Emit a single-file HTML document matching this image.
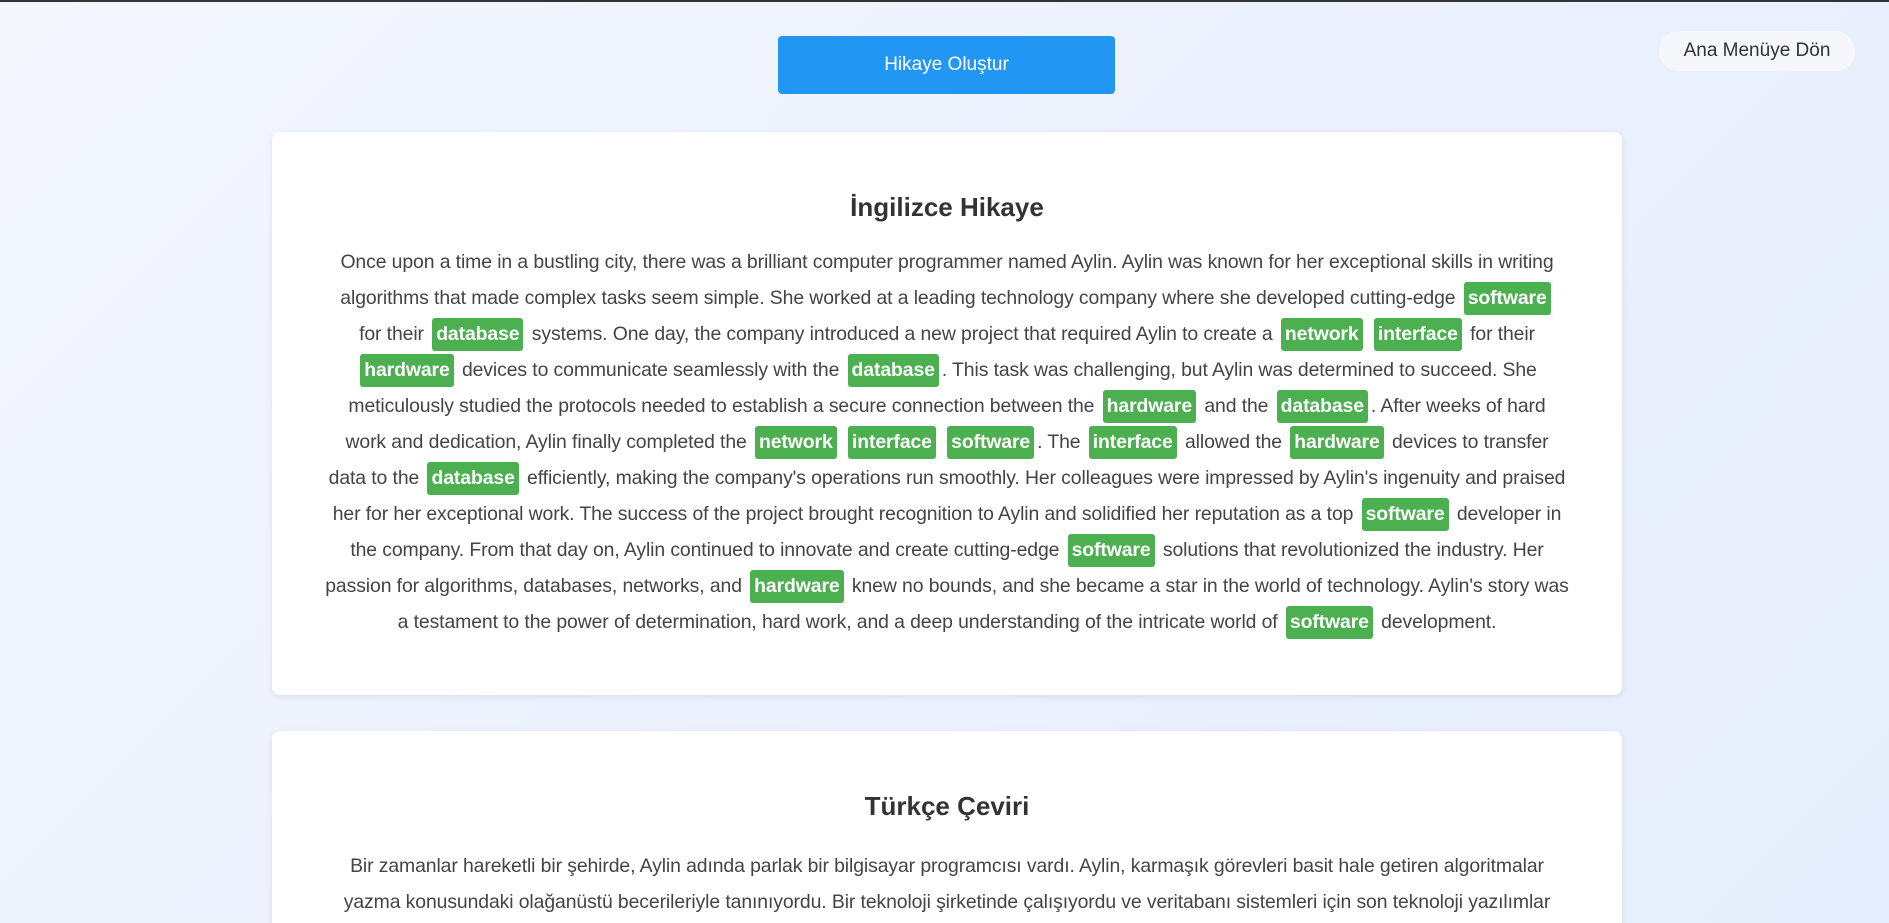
<!DOCTYPE html>
<html><head><meta charset="utf-8"><style>
html,body{margin:0;padding:0;width:1889px;height:923px;overflow:hidden;}
#w{width:1889px;height:923px;overflow:hidden;position:relative;font-family:"Liberation Sans",sans-serif;background:linear-gradient(135deg,#f4f7fe 0%,#eaf0fd 60%,#e6edfc 100%);border-top:2px solid #333;box-sizing:border-box;}
.btn{position:absolute;left:778px;top:34px;width:337px;height:58px;background:#2196f3;color:#fff;border-radius:4px;font-size:19px;display:flex;align-items:center;justify-content:center;}
.menu{position:absolute;left:1659px;top:29px;width:196px;height:40px;background:#f5f7fc;border-radius:20px;color:#333;font-size:19px;display:flex;align-items:center;justify-content:center;}
.card{position:absolute;left:272px;width:1350px;background:#fff;border-radius:8px;box-shadow:0 2px 8px rgba(0,0,0,.08);overflow:hidden;}
h2{position:absolute;left:0;right:0;margin:0;text-align:center;font-size:26px;font-weight:bold;color:#333;}
.txt{position:absolute;left:0;right:0;text-align:center;font-size:19.4px;color:#444;line-height:36px;white-space:nowrap;letter-spacing:-0.1px;}
.t{display:inline-block;background:#4caf50;color:#fff;font-weight:bold;border-radius:3px;padding:0 4px;line-height:33px;margin:0 3px;}
</style></head><body><div id="w">
<div class="btn">Hikaye Oluştur</div>
<div class="menu">Ana Menüye Dön</div>
<div class="card" style="top:130px;height:563px;">
<h2 style="top:60px;">İngilizce Hikaye</h2>
<div class="txt" style="top:112px;">
Once upon a time in a bustling city, there was a brilliant computer programmer named Aylin. Aylin was known for her exceptional skills in writing<br>
algorithms that made complex tasks seem simple. She worked at a leading technology company where she developed cutting-edge <span class="t">software</span><br>
for their <span class="t">database</span> systems. One day, the company introduced a new project that required Aylin to create a <span class="t">network</span> <span class="t">interface</span> for their<br>
<span class="t">hardware</span> devices to communicate seamlessly with the <span class="t">database</span>. This task was challenging, but Aylin was determined to succeed. She<br>
meticulously studied the protocols needed to establish a secure connection between the <span class="t">hardware</span> and the <span class="t">database</span>. After weeks of hard<br>
work and dedication, Aylin finally completed the <span class="t">network</span> <span class="t">interface</span> <span class="t">software</span>. The <span class="t">interface</span> allowed the <span class="t">hardware</span> devices to transfer<br>
data to the <span class="t">database</span> efficiently, making the company's operations run smoothly. Her colleagues were impressed by Aylin's ingenuity and praised<br>
her for her exceptional work. The success of the project brought recognition to Aylin and solidified her reputation as a top <span class="t">software</span> developer in<br>
the company. From that day on, Aylin continued to innovate and create cutting-edge <span class="t">software</span> solutions that revolutionized the industry. Her<br>
passion for algorithms, databases, networks, and <span class="t">hardware</span> knew no bounds, and she became a star in the world of technology. Aylin's story was<br>
a testament to the power of determination, hard work, and a deep understanding of the intricate world of <span class="t">software</span> development.
</div>
</div>
<div class="card" style="top:729px;height:200px;">
<h2 style="top:60px;">Türkçe Çeviri</h2>
<div class="txt" style="top:117px;">
Bir zamanlar hareketli bir şehirde, Aylin adında parlak bir bilgisayar programcısı vardı. Aylin, karmaşık görevleri basit hale getiren algoritmalar<br>
yazma konusundaki olağanüstü becerileriyle tanınıyordu. Bir teknoloji şirketinde çalışıyordu ve veritabanı sistemleri için son teknoloji yazılımlar<br>
geliştiriyordu. Bir gün, şirket Aylin'e, donanım cihazlarının veritabanı ile sorunsuz iletişim kurmalarını sağlayan bir ağ arayüzü oluşturmasını
</div>
</div>
</div></body></html>
